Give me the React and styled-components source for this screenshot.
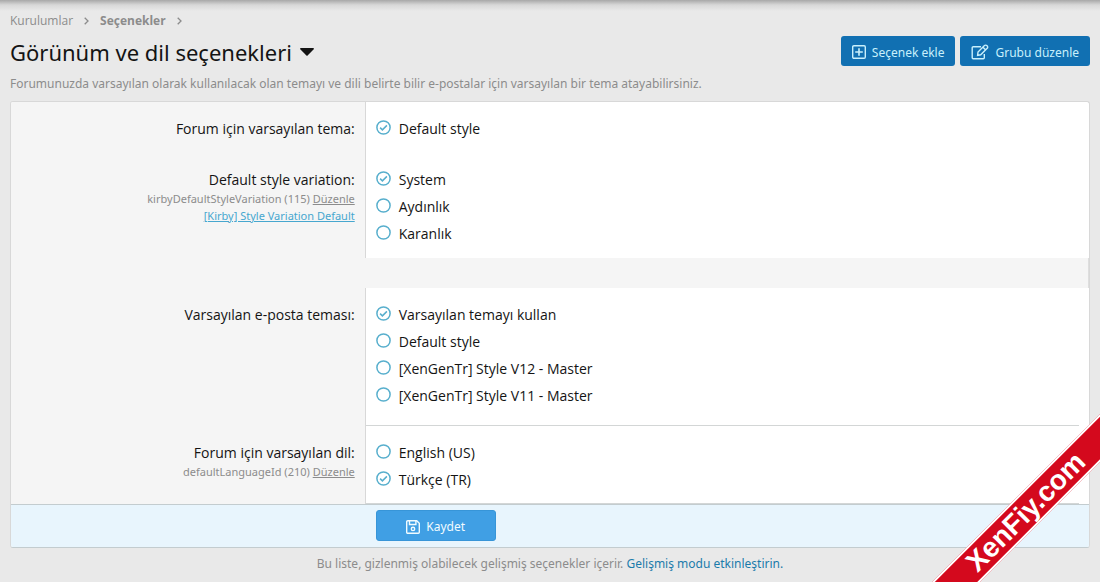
import { useState } from 'react'
import styled, { createGlobalStyle } from 'styled-components'

const GlobalStyle = createGlobalStyle`
    * {
        box-sizing: border-box;
    }

    body {
        margin: 0;
        background: #e9e9e9;
        color: #141414;
        font-family: "Open Sans", "Noto Sans", sans-serif;
        font-size: 14px;
        line-height: 21px;
    }
`

const Page = styled.div`
    min-height: 100vh;
    padding: 10px 10px 0px;
    background: linear-gradient(#a8a8a8, #d8d8d8 5px, #e9e9e9 11px);
`

const Breadcrumbs = styled.nav`
    display: flex;
    align-items: center;
    gap: 11px;
    font-size: 12px;
    color: #8c8c8c;
`

const Crumb = styled.a`
    color: #8c8c8c;
    font-weight: ${({ $current }) => $current ? 700 : 400};
    text-decoration: none;
`

const Header = styled.header`
    display: flex;
    justify-content: space-between;
    align-items: flex-start;
    padding: 5px 0px;
`

const Title = styled.h1`
    display: flex;
    align-items: center;
    gap: 8px;
    margin: 0;
    font-family: "Noto Sans", sans-serif;
    font-size: 22px;
    font-weight: 400;
    line-height: 32px;
`

const Caret = styled.button`
    display: flex;
    padding: 0;
    border: none;
    background: none;
    color: #141414;
    cursor: pointer;
`

const Actions = styled.div`
    display: flex;
    gap: 5px;
`

const Button = styled.button`
    display: flex;
    align-items: center;
    justify-content: center;
    gap: 6px;
    height: 30px;
    padding: 2px 11px 0px;
    border: none;
    border-radius: 3px;
    background: #1170b2;
    color: #c9f0fc;
    font-family: "Noto Sans", sans-serif;
    font-size: 12px;
    cursor: pointer;
`

const SaveButton = styled(Button)`
    width: 120px;
    height: 31px;
    border: 1px solid #3795d8;
    background: #409fe4;
    color: #f0fbff;
`

const Description = styled.p`
    margin: 0px 0px 6px;
    font-family: "Noto Sans", sans-serif;
    font-size: 12px;
    line-height: 22px;
    color: #8c8c8c;
`

const Panel = styled.form`
    border: 1px solid #d8d8d8;
    border-bottom-color: #c3cccf;
    border-radius: 3px;
    background: #fff;
    overflow: hidden;
`

const Row = styled.fieldset`
    display: flex;
    min-width: 0;
    margin: 0;
    padding: 0;
    border: none;
`

const Label = styled.div`
    flex: 0 0 calc(33% - 1px);
    padding: 16px 10px 14px;
    border-right: 1px solid #d8d8d8;
    background: #f5f5f5;
    text-align: right;
`

const Hint = styled.div`
    font-family: "Noto Sans", sans-serif;
    font-size: 11px;
    line-height: 17px;
    color: #8c8c8c;
`

const HintLink = styled.a`
    color: ${({ $blue }) => $blue ? '#47a7cf' : '#8c8c8c'};
    text-decoration: underline;
`

const Options = styled.div`
    flex: 1;
    display: flex;
    flex-direction: column;
    gap: 6px;
    margin-right: ${({ $divided }) => $divided ? 10 : 0}px;
    padding: 16px 10px ${({ $divided, $last }) => $divided && !$last ? 19 : $last ? 13 : 14}px;
    border-bottom: ${({ $divided }) => $divided ? '1px solid #d3d6d6' : 'none'};
`

const Spacer = styled.div`
    height: 30px;
    border-right: 1px solid #dedede;
    background: #f5f5f5;
`

const Option = styled.label`
    display: flex;
    align-items: center;
    gap: 8px;
    cursor: pointer;
`

const RadioBox = styled.span`
    position: relative;
    display: flex;
    margin-bottom: 2px;
    color: #58afcd;
`

const RadioInput = styled.input`
    position: absolute;
    inset: 0;
    width: 100%;
    height: 100%;
    margin: 0;
    opacity: 0;
    cursor: pointer;
`

const SubmitBar = styled.div`
    padding: 5px 0px 6px calc(33% + 9px);
    border-top: 1px solid #c3cccf;
    background: #e8f5fd;
`

const Footnote = styled.p`
    margin: 0;
    padding: 5px 0px;
    font-family: "Noto Sans", sans-serif;
    font-size: 12px;
    text-align: center;
    color: #8c8c8c;
`

const FootLink = styled.a`
    color: #1a7bab;
    text-decoration: none;
`

const RibbonCorner = styled.div`
    position: fixed;
    right: 0;
    bottom: 0;
    width: 170px;
    height: 170px;
    overflow: hidden;
    pointer-events: none;
`

const Ribbon = styled.div`
    position: absolute;
    top: 83px;
    left: -54px;
    width: 300px;
    height: 34px;
    border: 2px solid #fff;
    background: #d4091d;
    color: #fff;
    font-family: "Liberation Sans", sans-serif;
    font-size: 28px;
    font-weight: 700;
    line-height: 30px;
    text-align: center;
    transform: rotate(-45deg);
`

const ChevronIcon = () => (
    <svg width="5" height="8" viewBox="0 0 5 8" fill="none" stroke="currentColor" strokeWidth="1.3">
        <path d="M0.7 0.8L4 4 0.7 7.2" />
    </svg>
)

const CaretIcon = () => (
    <svg width="14" height="8" viewBox="0 0 14 8" fill="currentColor">
        <path d="M0.5 0h13L14 1 7.6 7.6a1 1 0 0 1-1.2 0L0 1z" />
    </svg>
)

const PlusIcon = () => (
    <svg width="14" height="14" viewBox="0 0 14 14" fill="none" stroke="currentColor" strokeWidth="1.4">
        <rect x="0.7" y="0.7" width="12.6" height="12.6" rx="1.2" />
        <path d="M7 3.2v7.6M3.2 7h7.6" strokeWidth="1.6" />
    </svg>
)

const EditIcon = () => (
    <svg width="18" height="16" viewBox="0 0 18 16" fill="none" stroke="currentColor" strokeWidth="1.4">
        <path d="M10 2.7H2.2a1 1 0 0 0-1 1v10.1a1 1 0 0 0 1 1h10.1a1 1 0 0 0 1-1V10" />
        <path d="M13.5 1.6a1.6 1.6 0 0 1 2.3 0l.4.4a1.6 1.6 0 0 1 0 2.3l-6.5 6.5-3.1.5.4-3.2zM12 3.2l2.7 2.7" />
    </svg>
)

const SaveIcon = () => (
    <svg width="14" height="14" viewBox="0 0 14 14" fill="none" stroke="currentColor" strokeWidth="1.4">
        <path d="M1.7.7h9l2.6 2.6v9a1 1 0 0 1-1 1H1.7a1 1 0 0 1-1-1V1.7a1 1 0 0 1 1-1z" />
        <path d="M3.5.9v3.6h6.4V.9" />
        <circle cx="7" cy="8.9" r="1.7" />
    </svg>
)

const Radio = ({ name, label, checked, onChange }) => (
    <Option>
        <RadioBox>
            <RadioInput type="radio" name={name} checked={checked} onChange={onChange} />
            <svg width="15" height="15" viewBox="0 0 15 15" fill="none" stroke="currentColor" strokeWidth="1.5">
                <circle cx="7.5" cy="7.5" r="6.6" />
                {checked && <path d="M4.1 7.6l2.3 2.3 4.5-4.5" />}
            </svg>
        </RadioBox>
        {label}
    </Option>
)

const OptionRow = ({ name, title, hint, items, selected, divided, last }) => {
    const [value, setValue] = useState(selected)

    return (
        <Row aria-label={title}>
            <Label>
                {title}
                {hint}
            </Label>
            <Options $divided={divided} $last={last}>
                {items.map((item, index) => (
                    <Radio
                        key={item}
                        name={name}
                        label={item}
                        checked={value === index}
                        onChange={() => setValue(index)}
                    />
                ))}
            </Options>
        </Row>
    )
}

const App = () => (
    <>
        <GlobalStyle />
        <Page>
            <Breadcrumbs>
                <Crumb href="#">Kurulumlar</Crumb>
                <ChevronIcon />
                <Crumb href="#" $current>Seçenekler</Crumb>
                <ChevronIcon />
            </Breadcrumbs>
            <Header>
                <Title>
                    Görünüm ve dil seçenekleri
                    <Caret type="button" aria-label="Menü"><CaretIcon /></Caret>
                </Title>
                <Actions>
                    <Button type="button"><PlusIcon />Seçenek ekle</Button>
                    <Button type="button"><EditIcon />Grubu düzenle</Button>
                </Actions>
            </Header>
            <Description>
                Forumunuzda varsayılan olarak kullanılacak olan temayı ve dili belirte bilir e-postalar için varsayılan bir tema atayabilirsiniz.
            </Description>
            <Panel onSubmit={(e) => e.preventDefault()}>
                <OptionRow
                    name="style"
                    title="Forum için varsayılan tema:"
                    items={['Default style']}
                    selected={0}
                />
                <OptionRow
                    name="variation"
                    title="Default style variation:"
                    hint={
                        <>
                            <Hint>kirbyDefaultStyleVariation (115) <HintLink href="#">Düzenle</HintLink></Hint>
                            <Hint><HintLink href="#" $blue>[Kirby] Style Variation Default</HintLink></Hint>
                        </>
                    }
                    items={['System', 'Aydınlık', 'Karanlık']}
                    selected={0}
                />
                <Spacer />
                <OptionRow
                    name="email"
                    title="Varsayılan e-posta teması:"
                    items={['Varsayılan temayı kullan', 'Default style', '[XenGenTr] Style V12 - Master', '[XenGenTr] Style V11 - Master']}
                    selected={0}
                    divided
                />
                <OptionRow
                    name="language"
                    title="Forum için varsayılan dil:"
                    hint={<Hint>defaultLanguageId (210) <HintLink href="#">Düzenle</HintLink></Hint>}
                    items={['English (US)', 'Türkçe (TR)']}
                    selected={1}
                    divided
                    last
                />
                <SubmitBar>
                    <SaveButton type="submit"><SaveIcon />Kaydet</SaveButton>
                </SubmitBar>
            </Panel>
            <Footnote>
                Bu liste, gizlenmiş olabilecek gelişmiş seçenekler içerir. <FootLink href="#">Gelişmiş modu etkinleştirin.</FootLink>
            </Footnote>
        </Page>
        <RibbonCorner>
            <Ribbon>XenFiy.com</Ribbon>
        </RibbonCorner>
    </>
)

export default App
